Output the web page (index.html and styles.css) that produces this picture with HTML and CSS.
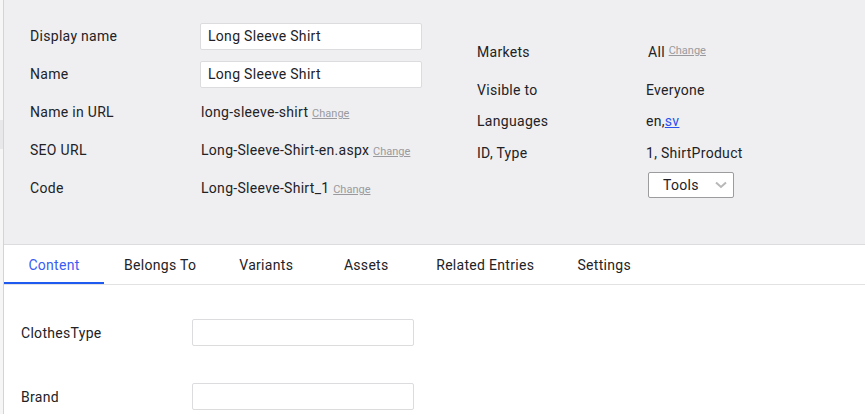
FILE: index.html
```html
<!DOCTYPE html>
<html>
<head>
<meta charset="utf-8">
<link rel="stylesheet" href="styles.css">
</head>
<body>
<div class="page">
  <div class="strip"><div class="strip-patch"></div></div>
  <div class="main">
    <section class="header">
      <div class="grid left-grid">
        <div class="label">Display name</div>
        <div class="value"><input class="field" type="text" value="Long Sleeve Shirt"></div>
        <div class="label">Name</div>
        <div class="value"><input class="field" type="text" value="Long Sleeve Shirt"></div>
        <div class="label">Name in URL</div>
        <div class="value text">long-sleeve-shirt <a class="change">Change</a></div>
        <div class="label">SEO URL</div>
        <div class="value text">Long-Sleeve-Shirt-en.aspx <a class="change">Change</a></div>
        <div class="label">Code</div>
        <div class="value text">Long-Sleeve-Shirt_1 <a class="change">Change</a></div>
      </div>
      <div class="grid right-grid">
        <div class="label">Markets</div>
        <div class="value text markets">All <a class="change raised">Change</a></div>
        <div class="label">Visible to</div>
        <div class="value text">Everyone</div>
        <div class="label">Languages</div>
        <div class="value text">en,<a class="lang">sv</a></div>
        <div class="label">ID, Type</div>
        <div class="value text">1, ShirtProduct</div>
        <div class="label"></div>
        <div class="value">
          <button class="tools">Tools
            <svg class="chev" width="12" height="8" viewBox="0 0 12 8"><path d="M1 1.5 L6 6 L11 1.5" fill="none" stroke="#b8b8b8" stroke-width="2"/></svg>
          </button>
        </div>
      </div>
    </section>
    <nav class="tabs">
      <div class="tab active">Content</div>
      <div class="tab">Belongs To</div>
      <div class="tab">Variants</div>
      <div class="tab">Assets</div>
      <div class="tab">Related Entries</div>
      <div class="tab">Settings</div>
    </nav>
    <section class="content">
      <div class="row">
        <div class="c-label">ClothesType</div>
        <input class="field c-field" type="text">
      </div>
      <div class="row">
        <div class="c-label">Brand</div>
        <input class="field c-field" type="text">
      </div>
    </section>
  </div>
</div>
</body>
</html>
```

FILE: styles.css
```css
* { box-sizing: border-box; }
html, body { margin: 0; padding: 0; background: #ffffff; }
body {
  font-family: Roboto, "Liberation Sans", sans-serif;
  font-size: 14px;
  letter-spacing: 0.3px;
  color: #222226;
  width: 865px;
  height: 414px;
  overflow: hidden;
}
.page { display: flex; height: 414px; }
.strip { width: 3px; background: #f6f6f7; flex: none; }
.strip-patch { margin-top: 120px; height: 29px; background: #e8e8ea; }
.main { flex: 1; border-left: 1px solid #d4d4d6; display: flex; flex-direction: column; }

.header {
  background: #efeff1;
  height: 244px;
  display: flex;
  align-items: flex-start;
  padding-left: 26px;
}
.grid { display: grid; align-items: center; }
.left-grid {
  margin-top: 17px;
  grid-template-columns: 170px 222px;
  grid-auto-rows: 38px;
}
.right-grid {
  margin-top: 33px;
  margin-left: 55px;
  grid-template-columns: 168px 120px;
  grid-template-rows: 38px 38px 24px 39px 26px;
}
.label { white-space: nowrap; }
.value { white-space: nowrap; }
.text { padding-left: 1px; }
.markets { padding-left: 3px; }

.field {
  display: block;
  width: 222px;
  height: 27px;
  border: 1px solid #dcdcde;
  border-radius: 2px;
  background: #fff;
  font-family: inherit;
  font-size: 14px;
  letter-spacing: 0.3px;
  color: #222226;
  padding: 0 7px;
  margin: 0;
  outline: none;
}
.change {
  font-size: 11px;
  letter-spacing: 0;
  color: #9a9a9e;
  text-decoration: underline;
  cursor: pointer;
}
.raised { vertical-align: 3px; }
.lang { color: #2a50f0; text-decoration: underline; }

.tools {
  display: flex;
  align-items: center;
  width: 86px;
  height: 26px;
  margin-left: 3px;
  background: #fff;
  border: 1px solid #9c9c9e;
  border-radius: 2px;
  font-family: inherit;
  font-size: 14px;
  letter-spacing: 0.3px;
  color: #222226;
  padding: 0 0 0 14px;
}
.chev { margin-left: 16px; }

.tabs {
  display: flex;
  border-top: 1px solid #dcdcde;
  border-bottom: 1px solid #e2e2e4;
  height: 41px;
  background: #fff;
}
.tab {
  min-width: 100px;
  padding: 0 20px;
  height: 39px;
  display: flex;
  align-items: center;
  justify-content: center;
  white-space: nowrap;
  color: #222226;
}
.tab.active { color: #3a5cf5; box-shadow: inset 0 -2px 0 #1f5af0; }

.content { padding: 34px 0 0 17px; display: flex; flex-direction: column; gap: 37px; }
.row { display: flex; align-items: center; height: 27px; }
.c-label { width: 171px; }
```
